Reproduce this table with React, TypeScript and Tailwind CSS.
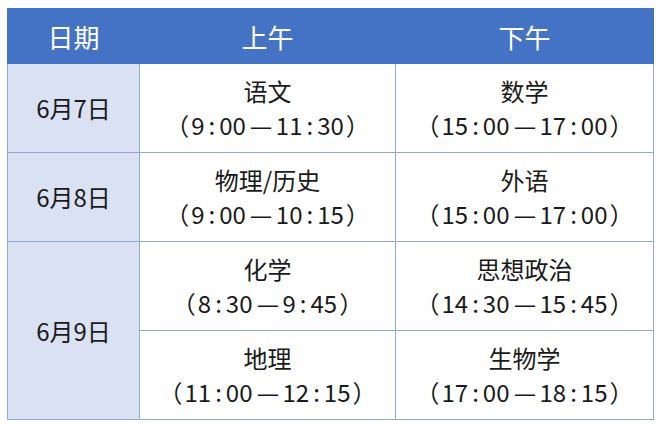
const font = { fontFamily: '"Noto Sans CJK SC", "Noto Sans", sans-serif' }

type Slot = { subject: string; time: string }

const rows: { date: string; am: Slot; pm: Slot }[] = [
  { date: '6月7日', am: { subject: '语文', time: '9:00—11:30' }, pm: { subject: '数学', time: '15:00—17:00' } },
  { date: '6月8日', am: { subject: '物理/历史', time: '9:00—10:15' }, pm: { subject: '外语', time: '15:00—17:00' } },
]

// time like 9:00—11:30, with airy full-width parens and a wide dash
function Time({ t }: { t: string }) {
  const [from, to] = t.split('—')
  const part = (s: string) =>
    s.split(':').map((p, i) => (
      <span key={i}>
        {i > 0 && <span className="px-[4px]">:</span>}
        {p}
      </span>
    ))
  return (
    <span className="[text-spacing-trim:space-all] whitespace-nowrap">
      <span className="inline-block w-[20px] text-left"><span className="relative -left-[6px]">（</span></span>
      {part(from)}
      <span className="inline-block w-[30px] text-center scale-x-[1.05]">—</span>
      {part(to)}
      <span className="inline-block w-[20px] text-left"><span className="relative left-[2px]">）</span></span>
    </span>
  )
}

function Cell({ s }: { s: Slot }) {
  return (
    <td className="border border-[#8eaadb] text-center align-middle text-[24px] leading-[34px] text-[#1a1a1a]">
      <div>{s.subject}</div>
      <div><Time t={s.time} /></div>
    </td>
  )
}

export default function App() {
  return (
    <div className="w-[660px] h-[424px] bg-white pl-[7px] pt-[8px]" style={font}>
      <table className="border-collapse table-fixed w-[646px]">
        <colgroup>
          <col className="w-[132px]" />
          <col className="w-[256px]" />
          <col className="w-[258px]" />
        </colgroup>
        <thead>
          <tr className="h-[55px] bg-[#4472c4] text-white text-[26px]">
            <th className="font-normal border border-[#4472c4]">日期</th>
            <th className="font-normal border border-[#4472c4]">上午</th>
            <th className="font-normal border border-[#4472c4]">下午</th>
          </tr>
        </thead>
        <tbody>
          {rows.map(r => (
            <tr key={r.date} className="h-[89px]">
              <td className="border border-[#8eaadb] bg-[#d9e1f2] text-center text-[24px] text-[#1a1a1a]">{r.date}</td>
              <Cell s={r.am} />
              <Cell s={r.pm} />
            </tr>
          ))}
          <tr className="h-[89px]">
            <td rowSpan={2} className="border border-[#8eaadb] bg-[#d9e1f2] text-center text-[24px] text-[#1a1a1a]">6月9日</td>
            <Cell s={{ subject: '化学', time: '8:30—9:45' }} />
            <Cell s={{ subject: '思想政治', time: '14:30—15:45' }} />
          </tr>
          <tr className="h-[89px]">
            <Cell s={{ subject: '地理', time: '11:00—12:15' }} />
            <Cell s={{ subject: '生物学', time: '17:00—18:15' }} />
          </tr>
        </tbody>
      </table>
    </div>
  )
}
